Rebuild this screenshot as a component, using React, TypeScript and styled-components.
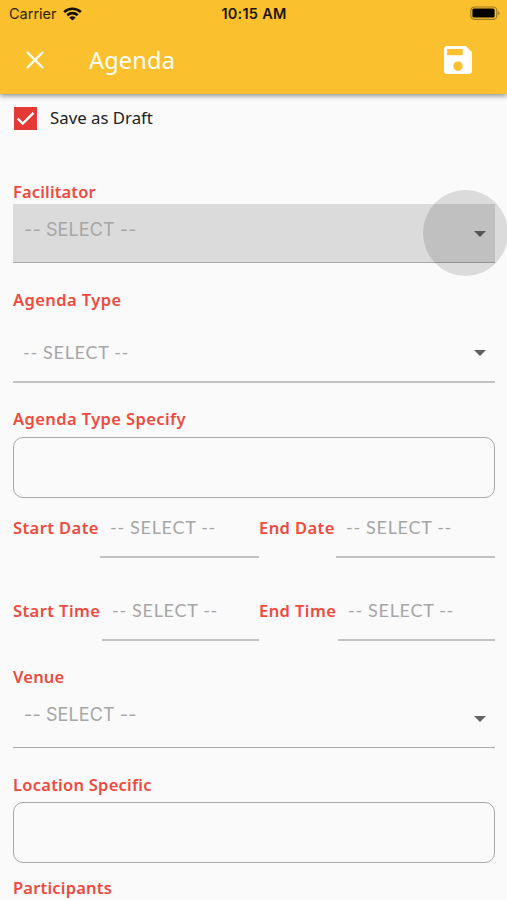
import React from "react";
import styled, { createGlobalStyle } from "styled-components";

const GlobalStyle = createGlobalStyle`
  * { box-sizing: border-box; }
  body { margin: 0; background: #fafafa; overflow: hidden; }
`;

const Screen = styled.div`
  width: 507px;
  height: 900px;
  overflow: hidden;
  display: flex;
  flex-direction: column;
  background: #fafafa;
  font-family: "Noto Sans", sans-serif;
`;

const Header = styled.header`
  flex: none;
  height: 94px;
  background: #fbc02d;
  box-shadow: 0 2px 5px rgba(0, 0, 0, 0.42);
  z-index: 1;
`;

const StatusBar = styled.div`
  height: 28px;
  padding: 0 7px 0 9px;
  display: grid;
  grid-template-columns: 1fr auto 1fr;
  align-items: center;
  font: 14.5px/28px Inter, sans-serif;
  color: #2c2308;
`;

const Carrier = styled.div`
  display: flex;
  align-items: center;
  gap: 6px;
`;

const Clock = styled.div`
  margin-right: 1px;
  font-weight: 600;
  font-size: 14.5px;
  letter-spacing: 0.25px;
  color: #1c1605;
`;

const BatteryIcon = styled.svg`
  justify-self: end;
`;

const Toolbar = styled.div`
  height: 66px;
  padding: 0 35px 3px 25px;
  display: flex;
  align-items: center;
`;

const Title = styled.h1`
  margin: 0 auto 0 44px;
  font-size: 23.5px;
  line-height: 30px;
  font-weight: 400;
  letter-spacing: 0.2px;
  color: #fffdf5;
`;

const IconButton = styled.button`
  display: flex;
  padding: 0;
  border: 0;
  background: none;
`;

const Form = styled.main`
  display: flex;
  flex-direction: column;
  padding: 12px 12px 0 13px;
`;

const DraftOption = styled.label`
  display: flex;
  align-items: center;
  gap: 13px;
  height: 24px;
  padding-left: 1px;
  margin-bottom: 51px;
  font-size: 16.8px;
  line-height: 22px;
  color: #222;
`;

const CheckBox = styled.span`
  display: flex;
  width: 23px;
  height: 23px;
  background: #e53935;
`;

const Field = styled.section<{ $height: number; $gap?: number }>`
  flex: none;
  display: flex;
  flex-direction: column;
  height: ${(p) => p.$height}px;
  gap: ${(p) => p.$gap ?? 0}px;
`;

const Label = styled.div<{ $tracking?: number }>`
  flex: none;
  height: 20px;
  font-size: 16.5px;
  line-height: 22px;
  font-weight: 600;
  letter-spacing: ${(p) => p.$tracking ?? 0.2}px;
  white-space: nowrap;
  color: #f0493e;
`;

const Select = styled.div<{ $height: number; $line?: number; $pressed?: boolean }>`
  position: relative;
  display: flex;
  align-items: center;
  justify-content: space-between;
  height: ${(p) => p.$height}px;
  padding: ${(p) => (p.$line === 2 ? 2 : 1)}px 9px 0 10px;
  background: ${(p) => (p.$pressed ? "#dbdbdb" : "transparent")};
  border-bottom: ${(p) => p.$line ?? 1}px solid ${(p) => (p.$line === 2 ? "#c3c3c3" : "#a8a8a8")};
`;

const Placeholder = styled.span<{ $system?: boolean; $lift?: number }>`
  font-family: ${(p) => (p.$system ? "Inter, sans-serif" : "Lato, sans-serif")};
  font-size: 18px;
  line-height: 22px;
  letter-spacing: ${(p) => (p.$system ? 0.1 : 0.7)}px;
  padding-left: ${(p) => (p.$system ? 1 : 0)}px;
  padding-bottom: ${(p) => p.$lift ?? 0}px;
  white-space: nowrap;
  color: #a6a6a6;
`;

const Ripple = styled.span`
  position: absolute;
  top: -14px;
  right: -13px;
  width: 85px;
  height: 86px;
  border-radius: 50%;
  background: rgba(0, 0, 0, 0.12);
`;

const TextBox = styled.div`
  height: 61px;
  border: 1px solid #a9a9a9;
  border-radius: 10px;
`;

const Pair = styled.div<{ $height: number }>`
  flex: none;
  display: grid;
  grid-template-columns: 246px 236px;
  height: ${(p) => p.$height}px;
`;

const InlineField = styled.div`
  display: flex;
  align-items: flex-start;
`;

const InlineLabel = styled(Label)<{ $width: number }>`
  width: ${(p) => p.$width}px;
`;

const InlineInput = styled.div`
  flex: 1;
  height: 41px;
  padding-left: 10px;
  border-bottom: 2px solid #c2c2c2;
  line-height: 20px;

  ${Placeholder} {
    line-height: 20px;
  }
`;

const Arrow = () => (
  <svg width="12" height="6" viewBox="0 0 12 6">
    <path d="M0 0h12L6 6z" fill="#616161" />
  </svg>
);

const Inline = ({ label, width }: { label: string; width: number }) => (
  <InlineField>
    <InlineLabel $width={width} $tracking={0.42}>{label}</InlineLabel>
    <InlineInput>
      <Placeholder>-- SELECT --</Placeholder>
    </InlineInput>
  </InlineField>
);

export default function App() {
  return (
    <Screen>
      <GlobalStyle />
      <Header>
        <StatusBar>
          <Carrier>
            Carrier
            <svg width="19" height="14" viewBox="0 0 19 14" fill="none" stroke="#151003" strokeWidth="2.7">
              <path d="M1.2 5.1C5.8.6 13.2.6 17.8 5.1" />
              <path d="M4.3 8.3c2.9-2.8 7.5-2.8 10.4 0" />
              <path d="M9.5 13.6 6.3 10.5c1.8-1.6 4.6-1.6 6.4 0z" fill="#151003" stroke="none" />
            </svg>
          </Carrier>
          <Clock>10:15 AM</Clock>
          <BatteryIcon width="30" height="16" viewBox="0 0 30 16">
            <rect x="0.8" y="1" width="26" height="12.4" rx="3.6" fill="none" stroke="#9b7a25" strokeWidth="1.2" />
            <rect x="2.4" y="2.6" width="22.2" height="9" rx="1.6" fill="#000" />
            <path d="M28.2 5c1.8.7 1.8 3.7 0 4.4z" fill="#9b7a25" />
          </BatteryIcon>
        </StatusBar>
        <Toolbar>
          <IconButton aria-label="Close">
            <svg width="20" height="20" viewBox="0 0 20 20" fill="none" stroke="#fffdf5" strokeWidth="2.4">
              <path d="M2 2l16 16M18 2L2 18" />
            </svg>
          </IconButton>
          <Title>Agenda</Title>
          <IconButton aria-label="Save">
            <svg width="28" height="28" viewBox="3 3 18 18" fill="#fff">
              <path d="M17 3H5c-1.11 0-2 .9-2 2v14c0 1.1.89 2 2 2h14c1.1 0 2-.9 2-2V7l-4-4zm-5 16c-1.66 0-3-1.34-3-3s1.34-3 3-3 3 1.34 3 3-1.34 3-3 3zm3-10H5V5h10v4z" />
            </svg>
          </IconButton>
        </Toolbar>
      </Header>

      <Form>
        <DraftOption>
          <CheckBox>
            <svg width="23" height="23" viewBox="0 0 23 23" fill="none" stroke="#fff" strokeWidth="2.4">
              <path d="M3.7 11.5l5 5L19.5 5.8" />
            </svg>
          </CheckBox>
          Save as Draft
        </DraftOption>

        <Field $height={108} $gap={3}>
          <Label $tracking={0.15}>Facilitator</Label>
          <Select $height={59} $pressed>
            <Placeholder $system $lift={8}>-- SELECT --</Placeholder>
            <Arrow />
            <Ripple />
          </Select>
        </Field>

        <Field $height={119} $gap={13}>
          <Label $tracking={0.42}>Agenda Type</Label>
          <Select $height={61} $line={2}>
            <Placeholder $lift={2}>-- SELECT --</Placeholder>
            <Arrow />
          </Select>
        </Field>

        <Field $height={109} $gap={9}>
          <Label $tracking={0.4}>Agenda Type Specify</Label>
          <TextBox />
        </Field>

        <Pair $height={83}>
          <Inline label="Start Date" width={87} />
          <Inline label="End Date" width={77} />
        </Pair>
        <Pair $height={66}>
          <Inline label="Start Time" width={89} />
          <Inline label="End Time" width={79} />
        </Pair>

        <Field $height={108} $gap={3}>
          <Label>Venue</Label>
          <Select $height={59}>
            <Placeholder $system $lift={8}>-- SELECT --</Placeholder>
            <Arrow />
          </Select>
        </Field>

        <Field $height={103} $gap={8}>
          <Label $tracking={0.25}>Location Specific</Label>
          <TextBox />
        </Field>

        <Label>Participants</Label>
      </Form>
    </Screen>
  );
}
